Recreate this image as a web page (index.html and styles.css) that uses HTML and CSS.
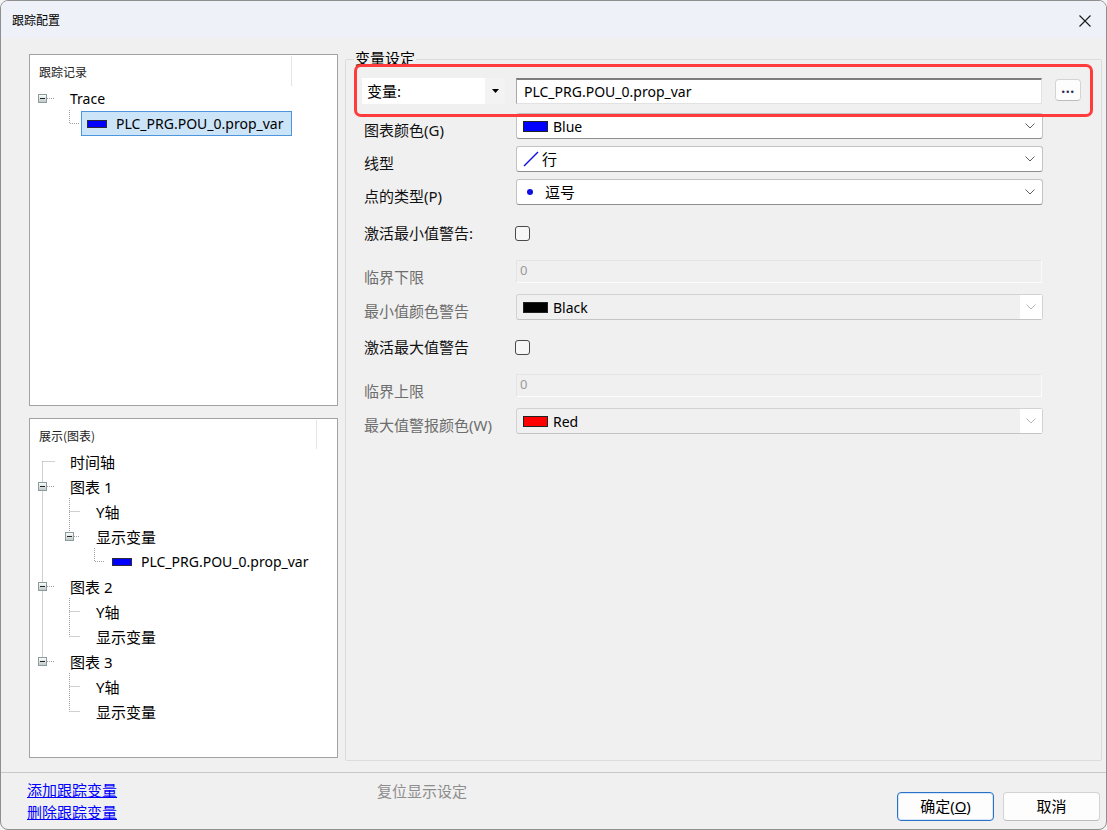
FILE: index.html
```html
<!DOCTYPE html>
<html lang="zh-CN">
<head>
<meta charset="utf-8">
<title>跟踪配置</title>
<link rel="stylesheet" href="styles.css">
</head>
<body>
<div class="window">
  <header class="titlebar">
    <span class="title">跟踪配置</span>
    <span class="close"><svg width="12" height="12" viewBox="0 0 12 12"><path d="M0.5 0.5 L11.5 11.5 M11.5 0.5 L0.5 11.5" stroke="#1a1a1a" stroke-width="1.1" fill="none"/></svg></span>
  </header>

  <div class="main">
    <div class="left">
      <div class="panel p-record">
        <svg class="lines" width="307" height="350" viewBox="0 0 307 350">
          <defs><linearGradient id="gb1" x1="0" y1="0" x2="0" y2="1"><stop offset="0" stop-color="#ffffff"/><stop offset="1" stop-color="#bfc6c6"/></linearGradient></defs>
          <g stroke="#a3a3a3" stroke-dasharray="1 1" fill="none">
            <path d="M17 44.5 H25"/>
            <path d="M39.5 56 V69.5 H50"/>
          </g>
          <rect x="8.5" y="40.5" width="8" height="8" fill="url(#gb1)" stroke="#8a9c9c"/>
          <path d="M10 44.5 H15" stroke="#222"/>
        </svg>
        <div class="th th-record">跟踪记录</div>
        <div class="node d0"><span class="latin">Trace</span></div>
        <div class="node item d1"><span class="entry selected"><span class="tsw"></span><span class="latin">PLC_PRG.POU_0.prop_var</span></span></div>
      </div>

      <div class="panel p-display">
        <svg class="lines" width="307" height="338" viewBox="0 0 307 338">
          <defs><linearGradient id="gb2" x1="0" y1="0" x2="0" y2="1"><stop offset="0" stop-color="#ffffff"/><stop offset="1" stop-color="#bfc6c6"/></linearGradient></defs>
          <g stroke="#a3a3a3" stroke-dasharray="1 1" fill="none">
            <path d="M12.5 44.5 V244.5"/>
            <path d="M12.5 44.5 H25"/>
            <path d="M17 69.5 H25"/>
            <path d="M17 169.5 H25"/>
            <path d="M17 244.5 H25"/>
            <path d="M39.5 81 V119.5"/>
            <path d="M39.5 94.5 H50"/>
            <path d="M44 119.5 H50"/>
            <path d="M64.5 131 V144.5 H75"/>
            <path d="M39.5 181 V219.5"/>
            <path d="M39.5 194.5 H50"/>
            <path d="M39.5 219.5 H50"/>
            <path d="M39.5 256 V294.5"/>
            <path d="M39.5 269.5 H50"/>
            <path d="M39.5 294.5 H50"/>
          </g>
          <g fill="url(#gb2)" stroke="#8a9c9c">
            <rect x="8.5" y="65.5" width="8" height="8"/>
            <rect x="8.5" y="165.5" width="8" height="8"/>
            <rect x="8.5" y="240.5" width="8" height="8"/>
            <rect x="35.5" y="115.5" width="8" height="8"/>
          </g>
          <g stroke="#222">
            <path d="M10 69.5 H15"/>
            <path d="M10 169.5 H15"/>
            <path d="M10 244.5 H15"/>
            <path d="M37 119.5 H42"/>
          </g>
        </svg>
        <div class="th th-display">展示(图表)</div>
        <div class="node d0">时间轴</div>
        <div class="node d0">图表 1</div>
        <div class="node d1">Y轴</div>
        <div class="node d1">显示变量</div>
        <div class="node item d2"><span class="entry"><span class="tsw"></span><span class="latin">PLC_PRG.POU_0.prop_var</span></span></div>
        <div class="node d0">图表 2</div>
        <div class="node d1">Y轴</div>
        <div class="node d1">显示变量</div>
        <div class="node d0">图表 3</div>
        <div class="node d1">Y轴</div>
        <div class="node d1">显示变量</div>
      </div>
    </div>

    <div class="group">
      <div class="legend">变量设定</div>
      <div class="annot"></div>
      <div class="rows">
        <div class="row r-var">
          <div class="varsel"><span class="vtext">变量:</span><span class="dd"><svg width="7" height="4" viewBox="0 0 7 4"><path d="M0 0 H7 L3.5 4 Z" fill="#000"/></svg></span></div>
          <div class="textin"><span class="latin">PLC_PRG.POU_0.prop_var</span></div>
          <div class="morebtn">...</div>
        </div>

        <div class="row">
          <div class="lbl">图表颜色(G)</div>
          <div class="select"><span class="sw sw-blue"></span><span class="latin">Blue</span><svg class="chev" width="10" height="6" viewBox="0 0 10 6"><path d="M0.5 0.5 L5 5 L9.5 0.5" fill="none" stroke="#606060"/></svg></div>
        </div>

        <div class="row">
          <div class="lbl">线型</div>
          <div class="select"><svg class="slash" width="16" height="16" viewBox="0 0 16 16"><path d="M1 15 L15 1" stroke="#1010e0" stroke-width="1.5"/></svg><span class="opt">行</span><svg class="chev" width="10" height="6" viewBox="0 0 10 6"><path d="M0.5 0.5 L5 5 L9.5 0.5" fill="none" stroke="#606060"/></svg></div>
        </div>

        <div class="row h47">
          <div class="lbl">点的类型(P)</div>
          <div class="select"><span class="dot"></span><span class="opt">逗号</span><svg class="chev" width="10" height="6" viewBox="0 0 10 6"><path d="M0.5 0.5 L5 5 L9.5 0.5" fill="none" stroke="#606060"/></svg></div>
        </div>

        <div class="row chk">
          <div class="lbl">激活最小值警告:</div>
          <span class="checkbox"></span>
        </div>

        <div class="row h34">
          <div class="lbl dim">临界下限</div>
          <div class="disin">0</div>
        </div>

        <div class="row h46">
          <div class="lbl dim">最小值颜色警告</div>
          <div class="select dis"><span class="sw sw-black"></span><span class="latin">Black</span><span class="ddw"><svg width="10" height="6" viewBox="0 0 10 6"><path d="M0.5 0.5 L5 5 L9.5 0.5" fill="none" stroke="#b8b8b8"/></svg></span></div>
        </div>

        <div class="row chk">
          <div class="lbl">激活最大值警告</div>
          <span class="checkbox"></span>
        </div>

        <div class="row h34">
          <div class="lbl dim">临界上限</div>
          <div class="disin">0</div>
        </div>

        <div class="row">
          <div class="lbl dim">最大值警报颜色(W)</div>
          <div class="select dis"><span class="sw sw-red"></span><span class="latin">Red</span><span class="ddw"><svg width="10" height="6" viewBox="0 0 10 6"><path d="M0.5 0.5 L5 5 L9.5 0.5" fill="none" stroke="#b8b8b8"/></svg></span></div>
        </div>
      </div>
    </div>
  </div>

  <footer class="footer">
    <div class="links">
      <span class="link">添加跟踪变量</span>
      <span class="link">删除跟踪变量</span>
    </div>
    <div class="reset">复位显示设定</div>
    <div class="buttons">
      <button class="btn primary">确定(<u>O</u>)</button>
      <button class="btn">取消</button>
    </div>
  </footer>
</div>
</body>
</html>
```

FILE: styles.css
```css
html, body {
  margin: 0;
  padding: 0;
  background: #f4f4f4;
}

body {
  font-family: "Noto Sans", "Noto Sans CJK SC", sans-serif;
  font-size: 15px;
  color: #000;
}

.window {
  width: 1107px;
  height: 830px;
  box-sizing: border-box;
  border: 1px solid #8f8f8f;
  border-radius: 8px;
  overflow: hidden;
  background: #f0f0f0;
  display: flex;
  flex-direction: column;
}

/* title bar */
.titlebar {
  height: 37px;
  flex: none;
  background: #eef2f8;
  display: flex;
  align-items: center;
}

.title {
  padding-left: 11px;
  font-size: 12px;
  line-height: 16px;
  font-family: "Noto Sans CJK SC", sans-serif;
}

.close {
  margin-left: auto;
  width: 42px;
  height: 37px;
  display: flex;
  align-items: center;
  justify-content: center;
  padding-top: 3px;
  box-sizing: border-box;
}

/* main area */
.main {
  height: 734px;
  flex: none;
  display: flex;
}

.left {
  padding: 16px 0 0 28px;
  display: flex;
  flex-direction: column;
  gap: 12px;
}

.panel {
  position: relative;
  width: 309px;
  box-sizing: border-box;
  border: 1px solid #a2a2a2;
  background: #fff;
  overflow: hidden;
}

.p-record { height: 352px; }
.p-display { height: 340px; }

.lines {
  position: absolute;
  left: 0;
  top: -1px;
  pointer-events: none;
}

.p-display .lines { top: -2px; }

.th {
  height: 31px;
  box-sizing: border-box;
  padding: 8px 0 0 9px;
  line-height: 18px;
  font-size: 12px;
  color: #222;
  font-family: "Noto Sans CJK SC", sans-serif;
  position: relative;
}

.th-display { height: 30px; }

.th::after {
  content: "";
  position: absolute;
  right: 0;
  top: 1px;
  bottom: 0;
  border-right: 1px solid #e4e4e4;
}

.th-record { width: 262px; }
.th-display { width: 287px; }

.node {
  height: 25px;
  display: flex;
  align-items: center;
  white-space: nowrap;
  line-height: 20px;
}

.node.d0 { padding-left: 40px; }
.node.d1 { padding-left: 66px; }
.node.item.d1 { padding-left: 51px; }
.node.item.d2 { padding-left: 76px; }

.entry {
  height: 25px;
  display: flex;
  align-items: center;
  padding-left: 6px;
  box-sizing: border-box;
}

.entry.selected {
  width: 211px;
  padding-left: 5px;
  border: 1px solid #4d95dc;
  background: #cce4f7;
}

.tsw {
  width: 20px;
  height: 8px;
  box-sizing: border-box;
  border: 1px solid #2a2a3a;
  background: #0000ff;
  margin-right: 9px;
  flex: none;
}

.latin {
  font-family: "Noto Sans", sans-serif;
  font-size: 14px;
}

/* right group */
.group {
  position: relative;
  margin: 21px 0 0 7px;
  width: 757px;
  height: 702px;
  box-sizing: border-box;
  border: 1px solid #dcdcdc;
  border-radius: 2px;
}

.legend {
  width: max-content;
  margin: -12px 0 0 8px;
  padding: 0 1px;
  line-height: 20px;
  height: 20px;
  background: #f0f0f0;
  font-family: "Noto Sans CJK SC", sans-serif;
}

.annot {
  position: absolute;
  left: 8px;
  top: 4px;
  width: 739px;
  height: 53px;
  box-sizing: border-box;
  border: 3px solid #ff3b3b;
  border-radius: 7px;
  pointer-events: none;
}

.rows {
  padding: 10px 0 0 18px;
}

.row {
  display: flex;
  align-items: flex-start;
  height: 33px;
}

.row.r-var { height: 35px; }
.row.h47 { height: 47px; }
.row.h46 { height: 46px; }
.row.h34 { height: 34px; }
.row.chk { height: 34px; }

.lbl {
  width: 152px;
  flex: none;
  padding-top: 7px;
  line-height: 20px;
  color: #111;
  white-space: nowrap;
}

.lbl.dim { color: #6d6d6d; }

.row.chk .lbl {
  padding-top: 0;
  line-height: 15px;
}

/* variable row */
.varsel {
  margin-left: -2px;
  width: 143px;
  height: 26px;
  background: #fff;
  display: flex;
  align-items: center;
  flex: none;
}

.vtext {
  padding-left: 5px;
  line-height: 20px;
}

.dd {
  margin-left: auto;
  width: 20px;
  height: 26px;
  background: #f3f3f3;
  display: flex;
  align-items: center;
  justify-content: center;
}

.textin {
  margin-left: 11px;
  width: 526px;
  height: 26px;
  box-sizing: border-box;
  background: #fff;
  border-top: 2px solid #7d7d7d;
  border-left: 1px solid #a8a8a8;
  border-right: 1px solid #e2e2e2;
  border-bottom: 1px solid #e2e2e2;
  padding-left: 7px;
  display: flex;
  align-items: center;
  flex: none;
}

.morebtn {
  margin: 1px 0 0 13px;
  width: 26px;
  height: 22px;
  box-sizing: border-box;
  background: #fdfdfd;
  border: 1px solid #d4d4d4;
  border-bottom-color: #bdbdbd;
  border-radius: 4px;
  font-size: 14px;
  font-weight: bold;
  line-height: 16px;
  text-align: center;
  color: #2c2c5c;
  letter-spacing: 0.5px;
}

/* selects */
.select {
  width: 527px;
  height: 26px;
  box-sizing: border-box;
  background: #fff;
  border: 1px solid #c3c3c3;
  border-bottom-color: #8e8e8e;
  border-radius: 3px;
  display: flex;
  align-items: center;
  padding-left: 6px;
  flex: none;
}

.select .chev {
  margin-left: auto;
  margin-right: 7px;
}

.sw {
  width: 25px;
  height: 11px;
  box-sizing: border-box;
  border: 1px solid #222;
  margin-right: 5px;
  flex: none;
}

.sw-blue { background: #0000ff; }
.sw-black { background: #000; }
.sw-red { background: #ff0000; }

.slash { flex: none; }

.opt {
  margin-left: 3px;
  line-height: 20px;
}

.dot {
  width: 6px;
  height: 6px;
  border-radius: 50%;
  background: #1010e0;
  margin: 0 9px 0 4px;
  flex: none;
}

.select.dis {
  background: #f0f0f0;
  border: 1px solid #d2d2d2;
  border-bottom-color: #c4c4c4;
}

.ddw {
  margin-left: auto;
  width: 22px;
  height: 100%;
  background: #fff;
  display: flex;
  align-items: center;
  justify-content: center;
}

.disin {
  width: 526px;
  height: 23px;
  box-sizing: border-box;
  background: #f0f0f0;
  border: 1px solid #e4e4e4;
  border-right-color: #fbfbfb;
  border-bottom-color: #fbfbfb;
  padding-left: 3px;
  font-family: "Noto Sans", sans-serif;
  font-size: 13px;
  line-height: 19px;
  color: #9a9a9a;
  flex: none;
}

.checkbox {
  margin-left: -1px;
  width: 15px;
  height: 15px;
  box-sizing: border-box;
  border: 1px solid #4a4a4a;
  border-radius: 3px;
  background: #f7f7f7;
  flex: none;
}

/* footer */
.footer {
  flex: 1;
  display: flex;
  border-top: 1px solid #c8c8c8;
}

.links {
  width: 376px;
  box-sizing: border-box;
  padding: 6px 0 0 26px;
  display: flex;
  flex-direction: column;
}

.link {
  line-height: 22px;
  color: #0000ff;
  text-decoration: underline;
  width: max-content;
}

.reset {
  padding-top: 7px;
  line-height: 22px;
  color: #8d8d8d;
}

.buttons {
  margin-left: auto;
  display: flex;
  gap: 9px;
  padding: 19px 6px 0 0;
}

.btn {
  width: 97px;
  height: 29px;
  box-sizing: border-box;
  font-family: "Noto Sans", "Noto Sans CJK SC", sans-serif;
  font-size: 15px;
  line-height: 20px;
  color: #000;
  background: #fdfdfd;
  border: 1px solid #d3d3d3;
  border-bottom-color: #bcbcbc;
  border-radius: 4px;
  padding: 0 0 1px;
}

.btn.primary {
  border: 1px solid #2a72c8;
  box-shadow: inset 0 0 0 1px #d7e6f6;
}
```
